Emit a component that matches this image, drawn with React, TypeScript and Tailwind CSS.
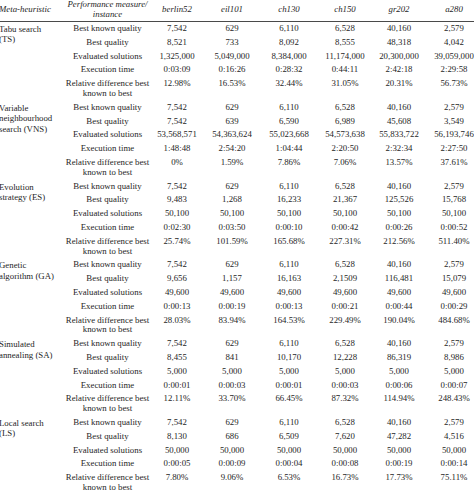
import React from "react";

// Results per meta-heuristic; columns follow the instance order in the header
const instances = ["berlin52", "eil101", "ch130", "ch150", "gr202", "a280"];

const bestKnown = ["7,542", "629", "6,110", "6,528", "40,160", "2,579"];

const groups = [
  {
    name: ["Tabu search", "(TS)"],
    best: ["8,521", "733", "8,092", "8,555", "48,318", "4,042"],
    evaluated: ["1,325,000", "5,049,000", "8,384,000", "11,174,000", "20,300,000", "39,059,000"],
    time: ["0:03:09", "0:16:26", "0:28:32", "0:44:11", "2:42:18", "2:29:58"],
    diff: ["12.98%", "16.53%", "32.44%", "31.05%", "20.31%", "56.73%"],
  },
  {
    name: ["Variable", "neighbourhood", "search (VNS)"],
    best: ["7,542", "639", "6,590", "6,989", "45,608", "3,549"],
    evaluated: ["53,568,571", "54,363,624", "55,023,668", "54,573,638", "55,833,722", "56,193,746"],
    time: ["1:48:48", "2:54:20", "1:04:44", "2:20:50", "2:32:34", "2:27:50"],
    diff: ["0%", "1.59%", "7.86%", "7.06%", "13.57%", "37.61%"],
  },
  {
    name: ["Evolution", "strategy (ES)"],
    best: ["9,483", "1,268", "16,233", "21,367", "125,526", "15,768"],
    evaluated: ["50,100", "50,100", "50,100", "50,100", "50,100", "50,100"],
    time: ["0:02:30", "0:03:50", "0:00:10", "0:00:42", "0:00:26", "0:00:52"],
    diff: ["25.74%", "101.59%", "165.68%", "227.31%", "212.56%", "511.40%"],
  },
  {
    name: ["Genetic", "algorithm (GA)"],
    best: ["9,656", "1,157", "16,163", "2,1509", "116,481", "15,079"],
    evaluated: ["49,600", "49,600", "49,600", "49,600", "49,600", "49,600"],
    time: ["0:00:13", "0:00:19", "0:00:13", "0:00:21", "0:00:44", "0:00:29"],
    diff: ["28.03%", "83.94%", "164.53%", "229.49%", "190.04%", "484.68%"],
  },
  {
    name: ["Simulated", "annealing (SA)"],
    best: ["8,455", "841", "10,170", "12,228", "86,319", "8,986"],
    evaluated: ["5,000", "5,000", "5,000", "5,000", "5,000", "5,000"],
    time: ["0:00:01", "0:00:03", "0:00:01", "0:00:03", "0:00:06", "0:00:07"],
    diff: ["12.11%", "33.70%", "66.45%", "87.32%", "114.94%", "248.43%"],
  },
  {
    name: ["Local search", "(LS)"],
    best: ["8,130", "686", "6,509", "7,620", "47,282", "4,516"],
    evaluated: ["50,000", "50,000", "50,000", "50,000", "50,000", "50,000"],
    time: ["0:00:05", "0:00:09", "0:00:04", "0:00:08", "0:00:19", "0:00:14"],
    diff: ["7.80%", "9.06%", "6.53%", "16.73%", "17.73%", "75.11%"],
  },
];

const cols = "grid grid-cols-[85px_54px_56px_58px_54px_54px_56px]";

function Row({ label, values }: { label: React.ReactNode; values: string[] }) {
  return (
    <div className={`${cols} py-[2px] leading-[9.8px] text-center`}>
      <div>{label}</div>
      {values.map((v, i) => (
        <div key={i} className="whitespace-nowrap">
          {v}
        </div>
      ))}
    </div>
  );
}

export default function App() {
  return (
    <main className="w-[474px] h-[492px] overflow-hidden bg-white">
      <div
        className="w-[483px] -mt-[3px] text-[8.8px] text-[#262626]"
        style={{ fontFamily: '"Liberation Serif", "Times New Roman", serif' }}
      >
        {/* 헤더 */}
        <div className="flex items-center py-[2px] leading-[10px] italic border-b border-[#4a4a4a]">
          <div className="w-[66px] -ml-px">Meta-heuristic</div>
          <div className={`${cols} items-center text-center`}>
            <div>
              Performance measure/
              <br />
              instance
            </div>
            {instances.map((n) => (
              <div key={n}>{n}</div>
            ))}
          </div>
        </div>

        {/* 그룹별 결과 */}
        {groups.map((g) => (
          <div key={g.name.join(" ")} className="flex">
            <div className="w-[66px] -ml-px pt-[2px] leading-[10.4px] whitespace-nowrap">
              {g.name.map((l) => (
                <div key={l}>{l}</div>
              ))}
            </div>
            <div>
              <Row label="Best known quality" values={bestKnown} />
              <Row label="Best quality" values={g.best} />
              <Row label="Evaluated solutions" values={g.evaluated} />
              <Row label="Execution time" values={g.time} />
              <div className={`${cols} py-[2px] leading-[9.8px] text-center`}>
                <div>
                  Relative difference best
                  <br />
                  known to best
                </div>
                {g.diff.map((v, i) => (
                  <div key={i}>{v}</div>
                ))}
              </div>
            </div>
          </div>
        ))}
      </div>
    </main>
  );
}
